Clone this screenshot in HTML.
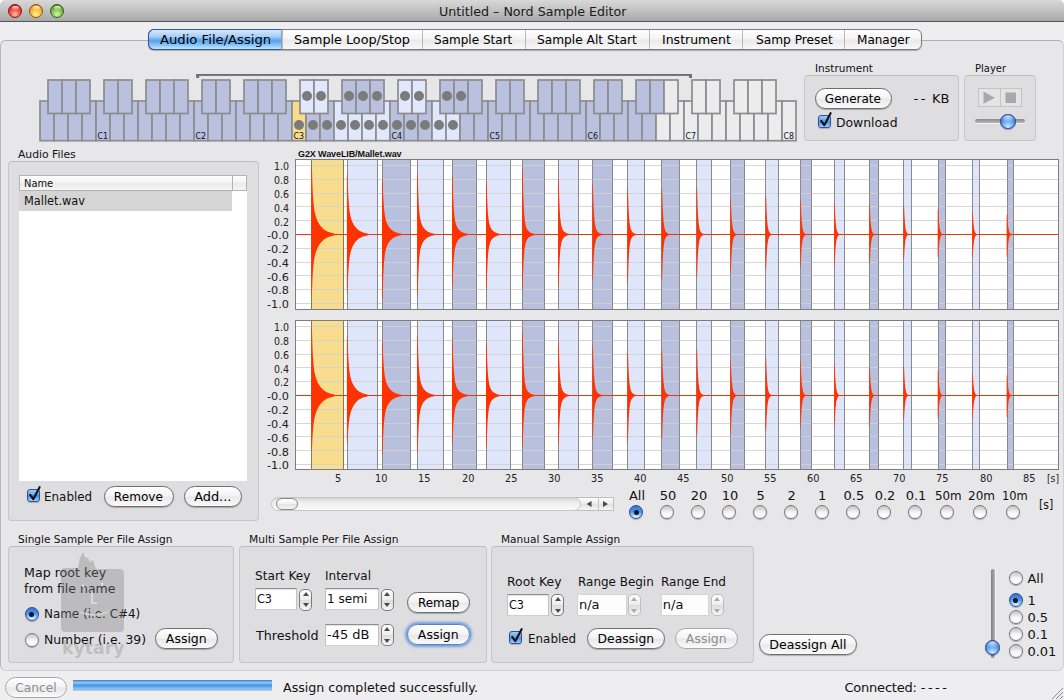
<!DOCTYPE html>
<html><head><meta charset="utf-8"><title>Untitled – Nord Sample Editor</title>
<style>
*{box-sizing:border-box;margin:0;padding:0}
html,body{width:1064px;height:700px;overflow:hidden;background:#eeedef}
body{position:relative;font-family:"DejaVu Sans","Liberation Sans",sans-serif;font-size:13px;color:#111}
.abs{position:absolute}
.t{position:absolute;white-space:nowrap;line-height:1;transform-origin:0 50%}
.wincorner{left:0;top:0;width:1064px;height:10px;background:#fff}
.titlebar{left:0;top:0;width:1064px;height:22px;background:linear-gradient(#d8d8d8,#c4c4c4 45%,#a7a7a7);border-bottom:1px solid #555;border-radius:5px 5px 0 0}
.tl{position:absolute;top:4px;width:14px;height:14px;border-radius:50%}
.pane{left:0;top:40px;width:1064px;height:631px;background:#e7e6e8;border:1px solid #b0b0b2;border-left-color:#b8b8bb;border-right-color:#cfcfd2;border-bottom-color:#d2d2d5;border-radius:6px}
.tabs{left:148px;top:29px;width:774px;height:21px;border:1px solid #7a7a7a;border-radius:6px;background:linear-gradient(#ffffff,#f4f4f4 48%,#e9e9e9 52%,#f8f8f8);box-shadow:0 1px 1px rgba(0,0,0,.25)}
.tabsel{left:148px;top:29px;width:134px;height:21px;border:1px solid #35549a;border-right-color:#7fa6dc;border-radius:6px 0 0 6px;background:linear-gradient(#d6e9fb 0%,#a8cff5 34%,#6eaef0 50%,#5aa2ee 58%,#8cc6f8 80%,#c2e8ff 100%)}
.grp{position:absolute;background:#dedde0;border:1px solid #c6c5c8;border-top-color:#bdbcc0;border-radius:4px}
.btn{position:absolute;height:21px;border-radius:10.5px;border:1px solid #6e6e6e;background:linear-gradient(#ffffff,#f3f3f3 48%,#e8e8e8 52%,#fafafa);box-shadow:0 1px 1px rgba(0,0,0,0.25);text-align:center;font-size:13px;line-height:19px;white-space:nowrap;color:#000}
.btn.dis{color:#8e8e8e;border-color:#a8a8a8;box-shadow:none}
.btn.def{border-color:#5582c8;box-shadow:0 0 2.5px 2px rgba(86,146,220,0.8)}
.fld{position:absolute;background:#fff;border:1px solid #c2c2c2;border-top-color:#8e8e8e;border-bottom-color:#d0d0d0;box-shadow:inset 0 1px 1px rgba(0,0,0,0.13);font-size:13px;line-height:19px;padding-left:1px;white-space:nowrap;overflow:hidden}
.fld.dis{border-color:#d4d4d4;box-shadow:none;background:#fdfdfd}
.spin{position:absolute;width:13px;height:22px;border:1px solid #7c7c7c;border-radius:5px;background:linear-gradient(#fff,#ececec 50%,#dcdcdc 50%,#f6f6f6)}
.spin.dis{border-color:#bdbdbd}
.spin:before,.spin:after{content:"";position:absolute;left:2.3px;border-left:3.2px solid transparent;border-right:3.2px solid transparent}
.spin:before{top:2.2px;border-bottom:4.4px solid #4a4a4a}
.spin:after{bottom:2.4px;border-top:4.4px solid #4a4a4a}
.spin.dis:before{border-bottom-color:#aaa}
.spin.dis:after{border-top-color:#aaa}
.radio{position:absolute;width:14px;height:14px;border-radius:50%;border:1px solid #777;background:radial-gradient(ellipse 90% 70% at 50% 95%,#fff 0%,#fafafa 45%,rgba(255,255,255,0) 100%),linear-gradient(#c8c8c8,#e4e4e4 45%,#f6f6f6);box-shadow:0 1px 1px rgba(0,0,0,.25)}
.radio.on{border-color:#2a4a94;background:radial-gradient(ellipse 85% 55% at 50% 100%,#e8f8ff 0%,#a8dcff 40%,rgba(130,190,250,0) 100%),linear-gradient(#3a74d0,#4d8ee4 40%,#6cb0f4)}
.radio.on:after{content:"";position:absolute;left:3.5px;top:3.5px;width:5px;height:5px;border-radius:50%;background:#0c1428}
.chk{position:absolute;width:13px;height:13px;border-radius:3px;border:1px solid #2b4f9e;background:linear-gradient(#9cccf6,#5f9fe6 50%,#4486dc 50%,#9ad4ff);box-shadow:0 1px 1px rgba(0,0,0,.2)}
.knob{width:15.5px;height:15.5px;border-radius:50%;border:1px solid #1e3f92;background:radial-gradient(ellipse 70% 40% at 50% 14%,rgba(255,255,255,.75),rgba(255,255,255,0) 100%),radial-gradient(circle at 50% 88%,#c8ecff,#6eb2f4 38%,#2c68cc 80%,#2458b8);box-shadow:0 1px 1px rgba(0,0,0,.3)}
.tl i{position:absolute;left:2.5px;top:0.5px;width:7px;height:4.5px;border-radius:50%;background:linear-gradient(rgba(255,255,255,.85),rgba(255,255,255,.05))}
</style></head>
<body>
<div class="abs wincorner"></div>
<div class="abs titlebar"></div>
<div class="tl" style="left:8px;background:radial-gradient(circle at 50% 78%,#ffc0b4 0%,#fa5a4c 40%,#d02a20 78%,#7c1812 100%);border:1px solid #7c1812"><i></i></div>
<div class="tl" style="left:29px;background:radial-gradient(circle at 50% 78%,#fff4b0 0%,#fcc43a 40%,#e49a1c 78%,#8c5412 100%);border:1px solid #8c5412"><i></i></div>
<div class="tl" style="left:50px;background:radial-gradient(circle at 50% 78%,#dcf4b4 0%,#8cc85c 40%,#569c2c 78%,#2c5c14 100%);border:1px solid #2c5c14"><i></i></div>
<div class="t" style="left:438.5px;top:5px;font-size:13px;color:#1a1a1a;transform:scaleX(0.973);">Untitled – Nord Sample Editor</div>
<div class="abs pane"></div>
<div class="abs tabs"></div>
<div class="abs tabsel"></div>
<div class="abs" style="left:282.0px;top:30px;width:1px;height:19px;background:#b9b9b9"></div>
<div class="abs" style="left:421.5px;top:30px;width:1px;height:19px;background:#b9b9b9"></div>
<div class="abs" style="left:524.7px;top:30px;width:1px;height:19px;background:#b9b9b9"></div>
<div class="abs" style="left:649.2px;top:30px;width:1px;height:19px;background:#b9b9b9"></div>
<div class="abs" style="left:742.0px;top:30px;width:1px;height:19px;background:#b9b9b9"></div>
<div class="abs" style="left:844.0px;top:30px;width:1px;height:19px;background:#b9b9b9"></div>
<div class="t" style="left:159.6px;top:33px;font-size:13px;color:#000;transform:scaleX(1.013);">Audio File/Assign</div>
<div class="t" style="left:293.5px;top:33px;font-size:13px;color:#000;transform:scaleX(0.983);">Sample Loop/Stop</div>
<div class="t" style="left:434.2px;top:33px;font-size:13px;color:#000;transform:scaleX(0.925);">Sample Start</div>
<div class="t" style="left:537.4px;top:33px;font-size:13px;color:#000;transform:scaleX(0.938);">Sample Alt Start</div>
<div class="t" style="left:662.0px;top:33px;font-size:13px;color:#000;transform:scaleX(0.962);">Instrument</div>
<div class="t" style="left:755.6px;top:33px;font-size:13px;color:#000;transform:scaleX(0.938);">Samp Preset</div>
<div class="t" style="left:856.5px;top:33px;font-size:13px;color:#000;transform:scaleX(0.925);">Manager</div>
<svg class="abs" style="left:0;top:60px" width="810" height="90" viewBox="0 60 810 90"><rect x="196.5" y="74" width="495" height="1.9" fill="#6f6f6f"/><rect x="196.2" y="74" width="3" height="4" fill="#6f6f6f"/><rect x="689" y="74" width="3" height="4" fill="#6f6f6f"/><rect x="40" y="101" width="14" height="39.7" fill="#b9c1df" stroke="#8c8c90" stroke-width="1.7"/><rect x="54" y="101" width="14" height="39.7" fill="#b9c1df" stroke="#8c8c90" stroke-width="1.7"/><rect x="68" y="101" width="14" height="39.7" fill="#b9c1df" stroke="#8c8c90" stroke-width="1.7"/><rect x="82" y="101" width="14" height="39.7" fill="#b9c1df" stroke="#8c8c90" stroke-width="1.7"/><rect x="96" y="101" width="14" height="39.7" fill="#b9c1df" stroke="#8c8c90" stroke-width="1.7"/><rect x="110" y="101" width="14" height="39.7" fill="#b9c1df" stroke="#8c8c90" stroke-width="1.7"/><rect x="124" y="101" width="14" height="39.7" fill="#b9c1df" stroke="#8c8c90" stroke-width="1.7"/><rect x="138" y="101" width="14" height="39.7" fill="#b9c1df" stroke="#8c8c90" stroke-width="1.7"/><rect x="152" y="101" width="14" height="39.7" fill="#b9c1df" stroke="#8c8c90" stroke-width="1.7"/><rect x="166" y="101" width="14" height="39.7" fill="#b9c1df" stroke="#8c8c90" stroke-width="1.7"/><rect x="180" y="101" width="14" height="39.7" fill="#b9c1df" stroke="#8c8c90" stroke-width="1.7"/><rect x="194" y="101" width="14" height="39.7" fill="#b9c1df" stroke="#8c8c90" stroke-width="1.7"/><rect x="208" y="101" width="14" height="39.7" fill="#b9c1df" stroke="#8c8c90" stroke-width="1.7"/><rect x="222" y="101" width="14" height="39.7" fill="#b9c1df" stroke="#8c8c90" stroke-width="1.7"/><rect x="236" y="101" width="14" height="39.7" fill="#b9c1df" stroke="#8c8c90" stroke-width="1.7"/><rect x="250" y="101" width="14" height="39.7" fill="#b9c1df" stroke="#8c8c90" stroke-width="1.7"/><rect x="264" y="101" width="14" height="39.7" fill="#b9c1df" stroke="#8c8c90" stroke-width="1.7"/><rect x="278" y="101" width="14" height="39.7" fill="#b9c1df" stroke="#8c8c90" stroke-width="1.7"/><rect x="292" y="101" width="14" height="39.7" fill="#f7dc8a" stroke="#8c8c90" stroke-width="1.7"/><rect x="306" y="101" width="14" height="39.7" fill="#b9c1df" stroke="#8c8c90" stroke-width="1.7"/><rect x="320" y="101" width="14" height="39.7" fill="#b9c1df" stroke="#8c8c90" stroke-width="1.7"/><rect x="334" y="101" width="14" height="39.7" fill="#e2e8fb" stroke="#8c8c90" stroke-width="1.7"/><rect x="348" y="101" width="14" height="39.7" fill="#e2e8fb" stroke="#8c8c90" stroke-width="1.7"/><rect x="362" y="101" width="14" height="39.7" fill="#e2e8fb" stroke="#8c8c90" stroke-width="1.7"/><rect x="376" y="101" width="14" height="39.7" fill="#e2e8fb" stroke="#8c8c90" stroke-width="1.7"/><rect x="390" y="101" width="14" height="39.7" fill="#b9c1df" stroke="#8c8c90" stroke-width="1.7"/><rect x="404" y="101" width="14" height="39.7" fill="#b9c1df" stroke="#8c8c90" stroke-width="1.7"/><rect x="418" y="101" width="14" height="39.7" fill="#b9c1df" stroke="#8c8c90" stroke-width="1.7"/><rect x="432" y="101" width="14" height="39.7" fill="#e2e8fb" stroke="#8c8c90" stroke-width="1.7"/><rect x="446" y="101" width="14" height="39.7" fill="#e2e8fb" stroke="#8c8c90" stroke-width="1.7"/><rect x="460" y="101" width="14" height="39.7" fill="#b9c1df" stroke="#8c8c90" stroke-width="1.7"/><rect x="474" y="101" width="14" height="39.7" fill="#b9c1df" stroke="#8c8c90" stroke-width="1.7"/><rect x="488" y="101" width="14" height="39.7" fill="#b9c1df" stroke="#8c8c90" stroke-width="1.7"/><rect x="502" y="101" width="14" height="39.7" fill="#b9c1df" stroke="#8c8c90" stroke-width="1.7"/><rect x="516" y="101" width="14" height="39.7" fill="#b9c1df" stroke="#8c8c90" stroke-width="1.7"/><rect x="530" y="101" width="14" height="39.7" fill="#b9c1df" stroke="#8c8c90" stroke-width="1.7"/><rect x="544" y="101" width="14" height="39.7" fill="#b9c1df" stroke="#8c8c90" stroke-width="1.7"/><rect x="558" y="101" width="14" height="39.7" fill="#b9c1df" stroke="#8c8c90" stroke-width="1.7"/><rect x="572" y="101" width="14" height="39.7" fill="#b9c1df" stroke="#8c8c90" stroke-width="1.7"/><rect x="586" y="101" width="14" height="39.7" fill="#b9c1df" stroke="#8c8c90" stroke-width="1.7"/><rect x="600" y="101" width="14" height="39.7" fill="#b9c1df" stroke="#8c8c90" stroke-width="1.7"/><rect x="614" y="101" width="14" height="39.7" fill="#b9c1df" stroke="#8c8c90" stroke-width="1.7"/><rect x="628" y="101" width="14" height="39.7" fill="#b9c1df" stroke="#8c8c90" stroke-width="1.7"/><rect x="642" y="101" width="14" height="39.7" fill="#b9c1df" stroke="#8c8c90" stroke-width="1.7"/><rect x="656" y="101" width="14" height="39.7" fill="#ececec" stroke="#8c8c90" stroke-width="1.7"/><rect x="670" y="101" width="14" height="39.7" fill="#ececec" stroke="#8c8c90" stroke-width="1.7"/><rect x="684" y="101" width="14" height="39.7" fill="#ececec" stroke="#8c8c90" stroke-width="1.7"/><rect x="698" y="101" width="14" height="39.7" fill="#ececec" stroke="#8c8c90" stroke-width="1.7"/><rect x="712" y="101" width="14" height="39.7" fill="#ececec" stroke="#8c8c90" stroke-width="1.7"/><rect x="726" y="101" width="14" height="39.7" fill="#ececec" stroke="#8c8c90" stroke-width="1.7"/><rect x="740" y="101" width="14" height="39.7" fill="#ececec" stroke="#8c8c90" stroke-width="1.7"/><rect x="754" y="101" width="14" height="39.7" fill="#ececec" stroke="#8c8c90" stroke-width="1.7"/><rect x="768" y="101" width="14" height="39.7" fill="#ececec" stroke="#8c8c90" stroke-width="1.7"/><rect x="782" y="101" width="14" height="39.7" fill="#ececec" stroke="#8c8c90" stroke-width="1.7"/><circle cx="299" cy="125" r="5" fill="#7b7b7b"/><circle cx="313" cy="125" r="5" fill="#7b7b7b"/><circle cx="327" cy="125" r="5" fill="#7b7b7b"/><circle cx="341" cy="125" r="5" fill="#7b7b7b"/><circle cx="355" cy="125" r="5" fill="#7b7b7b"/><circle cx="369" cy="125" r="5" fill="#7b7b7b"/><circle cx="383" cy="125" r="5" fill="#7b7b7b"/><circle cx="397" cy="125" r="5" fill="#7b7b7b"/><circle cx="411" cy="125" r="5" fill="#7b7b7b"/><circle cx="425" cy="125" r="5" fill="#7b7b7b"/><circle cx="439" cy="125" r="5" fill="#7b7b7b"/><circle cx="453" cy="125" r="5" fill="#7b7b7b"/><rect x="48" y="80" width="14" height="33.5" fill="#b9c1df" stroke="#8c8c90" stroke-width="1.7"/><rect x="62" y="80" width="14" height="33.5" fill="#b9c1df" stroke="#8c8c90" stroke-width="1.7"/><rect x="76" y="80" width="14" height="33.5" fill="#b9c1df" stroke="#8c8c90" stroke-width="1.7"/><rect x="104" y="80" width="14" height="33.5" fill="#b9c1df" stroke="#8c8c90" stroke-width="1.7"/><rect x="118" y="80" width="14" height="33.5" fill="#b9c1df" stroke="#8c8c90" stroke-width="1.7"/><rect x="146" y="80" width="14" height="33.5" fill="#b9c1df" stroke="#8c8c90" stroke-width="1.7"/><rect x="160" y="80" width="14" height="33.5" fill="#b9c1df" stroke="#8c8c90" stroke-width="1.7"/><rect x="174" y="80" width="14" height="33.5" fill="#b9c1df" stroke="#8c8c90" stroke-width="1.7"/><rect x="202" y="80" width="14" height="33.5" fill="#b9c1df" stroke="#8c8c90" stroke-width="1.7"/><rect x="216" y="80" width="14" height="33.5" fill="#b9c1df" stroke="#8c8c90" stroke-width="1.7"/><rect x="244" y="80" width="14" height="33.5" fill="#b9c1df" stroke="#8c8c90" stroke-width="1.7"/><rect x="258" y="80" width="14" height="33.5" fill="#b9c1df" stroke="#8c8c90" stroke-width="1.7"/><rect x="272" y="80" width="14" height="33.5" fill="#b9c1df" stroke="#8c8c90" stroke-width="1.7"/><rect x="300" y="80" width="14" height="33.5" fill="#e2e8fb" stroke="#8c8c90" stroke-width="1.7"/><circle cx="307" cy="96" r="5" fill="#7b7b7b"/><rect x="314" y="80" width="14" height="33.5" fill="#e2e8fb" stroke="#8c8c90" stroke-width="1.7"/><circle cx="321" cy="96" r="5" fill="#7b7b7b"/><rect x="342" y="80" width="14" height="33.5" fill="#b9c1df" stroke="#8c8c90" stroke-width="1.7"/><circle cx="349" cy="96" r="5" fill="#7b7b7b"/><rect x="356" y="80" width="14" height="33.5" fill="#b9c1df" stroke="#8c8c90" stroke-width="1.7"/><circle cx="363" cy="96" r="5" fill="#7b7b7b"/><rect x="370" y="80" width="14" height="33.5" fill="#b9c1df" stroke="#8c8c90" stroke-width="1.7"/><circle cx="377" cy="96" r="5" fill="#7b7b7b"/><rect x="398" y="80" width="14" height="33.5" fill="#e2e8fb" stroke="#8c8c90" stroke-width="1.7"/><circle cx="405" cy="96" r="5" fill="#7b7b7b"/><rect x="412" y="80" width="14" height="33.5" fill="#e2e8fb" stroke="#8c8c90" stroke-width="1.7"/><circle cx="419" cy="96" r="5" fill="#7b7b7b"/><rect x="440" y="80" width="14" height="33.5" fill="#b9c1df" stroke="#8c8c90" stroke-width="1.7"/><circle cx="447" cy="96" r="5" fill="#7b7b7b"/><rect x="454" y="80" width="14" height="33.5" fill="#b9c1df" stroke="#8c8c90" stroke-width="1.7"/><circle cx="461" cy="96" r="5" fill="#7b7b7b"/><rect x="468" y="80" width="14" height="33.5" fill="#b9c1df" stroke="#8c8c90" stroke-width="1.7"/><rect x="496" y="80" width="14" height="33.5" fill="#b9c1df" stroke="#8c8c90" stroke-width="1.7"/><rect x="510" y="80" width="14" height="33.5" fill="#b9c1df" stroke="#8c8c90" stroke-width="1.7"/><rect x="538" y="80" width="14" height="33.5" fill="#b9c1df" stroke="#8c8c90" stroke-width="1.7"/><rect x="552" y="80" width="14" height="33.5" fill="#b9c1df" stroke="#8c8c90" stroke-width="1.7"/><rect x="566" y="80" width="14" height="33.5" fill="#b9c1df" stroke="#8c8c90" stroke-width="1.7"/><rect x="594" y="80" width="14" height="33.5" fill="#b9c1df" stroke="#8c8c90" stroke-width="1.7"/><rect x="608" y="80" width="14" height="33.5" fill="#b9c1df" stroke="#8c8c90" stroke-width="1.7"/><rect x="636" y="80" width="14" height="33.5" fill="#b9c1df" stroke="#8c8c90" stroke-width="1.7"/><rect x="650" y="80" width="14" height="33.5" fill="#b9c1df" stroke="#8c8c90" stroke-width="1.7"/><rect x="664" y="80" width="14" height="33.5" fill="#ececec" stroke="#8c8c90" stroke-width="1.7"/><rect x="692" y="80" width="14" height="33.5" fill="#ececec" stroke="#8c8c90" stroke-width="1.7"/><rect x="706" y="80" width="14" height="33.5" fill="#ececec" stroke="#8c8c90" stroke-width="1.7"/><rect x="734" y="80" width="14" height="33.5" fill="#ececec" stroke="#8c8c90" stroke-width="1.7"/><rect x="748" y="80" width="14" height="33.5" fill="#ececec" stroke="#8c8c90" stroke-width="1.7"/><rect x="762" y="80" width="14" height="33.5" fill="#ececec" stroke="#8c8c90" stroke-width="1.7"/><text x="97.6" y="138.8" font-size="9" textLength="10.5" lengthAdjust="spacingAndGlyphs" fill="#0c0c28" font-family='"DejaVu Sans","Liberation Sans",sans-serif'>C1</text><text x="195.6" y="138.8" font-size="9" textLength="10.5" lengthAdjust="spacingAndGlyphs" fill="#0c0c28" font-family='"DejaVu Sans","Liberation Sans",sans-serif'>C2</text><text x="293.6" y="138.8" font-size="9" textLength="10.5" lengthAdjust="spacingAndGlyphs" fill="#0c0c28" font-family='"DejaVu Sans","Liberation Sans",sans-serif'>C3</text><text x="391.6" y="138.8" font-size="9" textLength="10.5" lengthAdjust="spacingAndGlyphs" fill="#0c0c28" font-family='"DejaVu Sans","Liberation Sans",sans-serif'>C4</text><text x="489.6" y="138.8" font-size="9" textLength="10.5" lengthAdjust="spacingAndGlyphs" fill="#0c0c28" font-family='"DejaVu Sans","Liberation Sans",sans-serif'>C5</text><text x="587.6" y="138.8" font-size="9" textLength="10.5" lengthAdjust="spacingAndGlyphs" fill="#0c0c28" font-family='"DejaVu Sans","Liberation Sans",sans-serif'>C6</text><text x="685.6" y="138.8" font-size="9" textLength="10.5" lengthAdjust="spacingAndGlyphs" fill="#0c0c28" font-family='"DejaVu Sans","Liberation Sans",sans-serif'>C7</text><text x="783.6" y="138.8" font-size="9" textLength="10.5" lengthAdjust="spacingAndGlyphs" fill="#0c0c28" font-family='"DejaVu Sans","Liberation Sans",sans-serif'>C8</text></svg>
<div class="t" style="left:814.5px;top:63px;font-size:11px;color:#111;transform:scaleX(0.958);">Instrument</div>
<div class="grp" style="left:804.0px;top:75.0px;width:155.0px;height:66.0px;"></div>
<div class="btn " style="left:815.0px;top:88.0px;width:77.0px;"><span style="display:inline-block;transform:translateX(-0.5px) scaleX(0.922)">Generate</span></div>
<div class="t" style="left:913.6px;top:91.6px;font-size:13px"><span style="letter-spacing:2.4px">--</span> KB</div>
<div class="chk" style="left:817.5px;top:115.0px"><svg width="18" height="18" viewBox="0 0 18 18" style="position:absolute;left:-1px;top:-5px;overflow:visible"><path d="M3.2 9.8 L6.3 14.2 L12.6 2.2" fill="none" stroke="#111" stroke-width="2.1" stroke-linecap="round" stroke-linejoin="round"/></svg></div>
<div class="t" style="left:835.5px;top:116px;font-size:13px;color:#111;transform:scaleX(0.952);">Download</div>
<div class="t" style="left:974.5px;top:63px;font-size:11px;color:#111;transform:scaleX(0.906);">Player</div>
<div class="grp" style="left:964.0px;top:75.0px;width:72.0px;height:66.0px;"></div>
<div class="abs" style="left:978px;top:88px;width:44px;height:19px;border:1px solid #c4c4c4;background:#e4e4e4"></div>
<div class="abs" style="left:999.5px;top:88px;width:1px;height:19px;background:#c4c4c4"></div>
<svg class="abs" style="left:978px;top:88px" width="44" height="19"><path d="M5.5 3.5 L17 9.7 L5.5 15.8 Z" fill="#a9a9a9"/><rect x="27.5" y="4.5" width="10.5" height="10.5" fill="#a9a9a9"/></svg>
<div class="abs" style="left:975px;top:119.3px;width:50px;height:4px;border-radius:2px;background:linear-gradient(#8a8a8a,#b8b8b8);box-shadow:0 1px 0 rgba(255,255,255,.6)"></div>
<div class="abs knob" style="left:1000px;top:113.5px"></div>
<div class="t" style="left:18.3px;top:149px;font-size:11px;color:#111;transform:scaleX(0.980);">Audio Files</div>
<div class="grp" style="left:8.0px;top:161.0px;width:250.5px;height:359.6px;"></div>
<div class="abs" style="left:19px;top:175px;width:228px;height:306px;background:#fff"></div>
<div class="abs" style="left:19px;top:174.5px;width:228px;height:16px;border:1px solid #b4b4b4;background:linear-gradient(#fdfdfd,#f3f3f3 50%,#e9e9e9 50%,#f6f6f6)"></div>
<div class="abs" style="left:231.5px;top:175px;width:1px;height:15px;background:#b4b4b4"></div>
<div class="t" style="left:23.6px;top:178px;font-size:11px;color:#111;transform:scaleX(0.900);">Name</div>
<div class="abs" style="left:19px;top:190.5px;width:213px;height:20px;background:#d5d5d5"></div>
<div class="t" style="left:24.0px;top:194px;font-size:13px;color:#111;transform:scaleX(0.872);">Mallet.wav</div>
<div class="chk" style="left:26.8px;top:489.0px"><svg width="18" height="18" viewBox="0 0 18 18" style="position:absolute;left:-1px;top:-5px;overflow:visible"><path d="M3.2 9.8 L6.3 14.2 L12.6 2.2" fill="none" stroke="#111" stroke-width="2.1" stroke-linecap="round" stroke-linejoin="round"/></svg></div>
<div class="t" style="left:44.4px;top:490px;font-size:13px;color:#111;transform:scaleX(0.917);">Enabled</div>
<div class="btn " style="left:103.5px;top:486.0px;width:70.5px;"><span style="display:inline-block;transform:scaleX(0.929)">Remove</span></div>
<div class="btn " style="left:184.0px;top:486.0px;width:58.0px;"><span style="display:inline-block;transform:scaleX(0.993)">Add...</span></div>
<div class="t" style="left:298px;top:149.6px;font-size:9px;font-weight:bold;font-family:'Liberation Sans',sans-serif;color:#111;letter-spacing:-0.1px">G2X WaveLIB/Mallet.wav</div>
<svg class="abs" style="left:294px;top:158px" width="766" height="153" viewBox="294 158 766 153"><rect x="295.5" y="159.5" width="763.0" height="150.0" fill="#fff"/><rect x="311" y="159.5" width="32" height="150.0" fill="#f8dd8e"/><rect x="347" y="159.5" width="30" height="150.0" fill="#dfe6fc"/><rect x="382" y="159.5" width="28" height="150.0" fill="#b8c0de"/><rect x="417" y="159.5" width="26" height="150.0" fill="#dfe6fc"/><rect x="452" y="159.5" width="24" height="150.0" fill="#b8c0de"/><rect x="486" y="159.5" width="24" height="150.0" fill="#dfe6fc"/><rect x="522" y="159.5" width="22" height="150.0" fill="#b8c0de"/><rect x="558" y="159.5" width="20" height="150.0" fill="#dfe6fc"/><rect x="592" y="159.5" width="20" height="150.0" fill="#b8c0de"/><rect x="627" y="159.5" width="17" height="150.0" fill="#dfe6fc"/><rect x="661" y="159.5" width="18" height="150.0" fill="#b8c0de"/><rect x="696" y="159.5" width="15" height="150.0" fill="#dfe6fc"/><rect x="730" y="159.5" width="14" height="150.0" fill="#b8c0de"/><rect x="765" y="159.5" width="13" height="150.0" fill="#dfe6fc"/><rect x="800" y="159.5" width="11" height="150.0" fill="#b8c0de"/><rect x="834" y="159.5" width="10" height="150.0" fill="#dfe6fc"/><rect x="869" y="159.5" width="9" height="150.0" fill="#b8c0de"/><rect x="903" y="159.5" width="8" height="150.0" fill="#dfe6fc"/><rect x="938" y="159.5" width="7" height="150.0" fill="#b8c0de"/><rect x="972" y="159.5" width="7" height="150.0" fill="#dfe6fc"/><rect x="1007" y="159.5" width="6" height="150.0" fill="#b8c0de"/><rect x="295.5" y="165" width="763.0" height="1" fill="#d2d2d2" fill-opacity="0.9"/><rect x="295.5" y="179" width="763.0" height="1" fill="#d2d2d2" fill-opacity="0.9"/><rect x="295.5" y="193" width="763.0" height="1" fill="#d2d2d2" fill-opacity="0.9"/><rect x="295.5" y="206" width="763.0" height="1" fill="#d2d2d2" fill-opacity="0.9"/><rect x="295.5" y="220" width="763.0" height="1" fill="#d2d2d2" fill-opacity="0.9"/><rect x="295.5" y="248" width="763.0" height="1" fill="#d2d2d2" fill-opacity="0.9"/><rect x="295.5" y="262" width="763.0" height="1" fill="#d2d2d2" fill-opacity="0.9"/><rect x="295.5" y="275" width="763.0" height="1" fill="#d2d2d2" fill-opacity="0.9"/><rect x="295.5" y="289" width="763.0" height="1" fill="#d2d2d2" fill-opacity="0.9"/><rect x="295.5" y="303" width="763.0" height="1" fill="#d2d2d2" fill-opacity="0.9"/><rect x="311" y="159.5" width="1" height="150.0" fill="#8a7c50"/><rect x="343" y="159.5" width="1" height="150.0" fill="#8a7c50"/><rect x="347" y="159.5" width="1" height="150.0" fill="#8a8a8a"/><rect x="377" y="159.5" width="1" height="150.0" fill="#8a8a8a"/><rect x="382" y="159.5" width="1" height="150.0" fill="#8a8a8a"/><rect x="410" y="159.5" width="1" height="150.0" fill="#8a8a8a"/><rect x="417" y="159.5" width="1" height="150.0" fill="#8a8a8a"/><rect x="443" y="159.5" width="1" height="150.0" fill="#8a8a8a"/><rect x="452" y="159.5" width="1" height="150.0" fill="#8a8a8a"/><rect x="476" y="159.5" width="1" height="150.0" fill="#8a8a8a"/><rect x="486" y="159.5" width="1" height="150.0" fill="#8a8a8a"/><rect x="510" y="159.5" width="1" height="150.0" fill="#8a8a8a"/><rect x="522" y="159.5" width="1" height="150.0" fill="#8a8a8a"/><rect x="544" y="159.5" width="1" height="150.0" fill="#8a8a8a"/><rect x="558" y="159.5" width="1" height="150.0" fill="#8a8a8a"/><rect x="578" y="159.5" width="1" height="150.0" fill="#8a8a8a"/><rect x="592" y="159.5" width="1" height="150.0" fill="#8a8a8a"/><rect x="612" y="159.5" width="1" height="150.0" fill="#8a8a8a"/><rect x="627" y="159.5" width="1" height="150.0" fill="#8a8a8a"/><rect x="644" y="159.5" width="1" height="150.0" fill="#8a8a8a"/><rect x="661" y="159.5" width="1" height="150.0" fill="#8a8a8a"/><rect x="679" y="159.5" width="1" height="150.0" fill="#8a8a8a"/><rect x="696" y="159.5" width="1" height="150.0" fill="#8a8a8a"/><rect x="711" y="159.5" width="1" height="150.0" fill="#8a8a8a"/><rect x="730" y="159.5" width="1" height="150.0" fill="#8a8a8a"/><rect x="744" y="159.5" width="1" height="150.0" fill="#8a8a8a"/><rect x="765" y="159.5" width="1" height="150.0" fill="#8a8a8a"/><rect x="778" y="159.5" width="1" height="150.0" fill="#8a8a8a"/><rect x="800" y="159.5" width="1" height="150.0" fill="#8a8a8a"/><rect x="811" y="159.5" width="1" height="150.0" fill="#8a8a8a"/><rect x="834" y="159.5" width="1" height="150.0" fill="#8a8a8a"/><rect x="844" y="159.5" width="1" height="150.0" fill="#8a8a8a"/><rect x="869" y="159.5" width="1" height="150.0" fill="#8a8a8a"/><rect x="878" y="159.5" width="1" height="150.0" fill="#8a8a8a"/><rect x="903" y="159.5" width="1" height="150.0" fill="#8a8a8a"/><rect x="911" y="159.5" width="1" height="150.0" fill="#8a8a8a"/><rect x="938" y="159.5" width="1" height="150.0" fill="#8a8a8a"/><rect x="945" y="159.5" width="1" height="150.0" fill="#8a8a8a"/><rect x="972" y="159.5" width="1" height="150.0" fill="#8a8a8a"/><rect x="979" y="159.5" width="1" height="150.0" fill="#8a8a8a"/><rect x="1007" y="159.5" width="1" height="150.0" fill="#8a8a8a"/><rect x="1013" y="159.5" width="1" height="150.0" fill="#8a8a8a"/><rect x="295.5" y="234" width="763.0" height="1" fill="#e2380a"/><polygon fill="#ff3300" points="311.3,173.2 311.5,166.4 311.9,166.4 312.4,183.7 312.9,194.7 313.4,201.9 313.9,206.8 314.4,210.4 314.9,213.0 315.4,215.1 315.9,216.8 316.4,218.3 316.9,219.6 317.4,220.7 317.9,221.8 318.4,222.7 318.9,223.6 319.4,224.4 319.9,225.1 320.4,225.8 320.9,226.5 321.4,227.1 321.9,227.6 322.4,228.1 322.9,228.6 323.4,229.0 323.9,229.4 324.4,229.8 324.9,230.1 325.4,230.4 325.9,230.7 326.4,231.0 326.9,231.3 327.4,231.5 327.9,231.7 328.4,231.9 328.9,232.1 329.4,232.3 329.9,232.4 330.4,232.6 330.9,232.7 331.4,232.9 331.9,233.0 332.4,233.1 332.9,233.2 333.4,233.3 333.9,233.4 335.3,234.5 333.9,235.6 333.4,235.7 332.9,235.8 332.4,235.9 331.9,236.0 331.4,236.1 330.9,236.3 330.4,236.4 329.9,236.6 329.4,236.7 328.9,236.9 328.4,237.1 327.9,237.3 327.4,237.5 326.9,237.7 326.4,238.0 325.9,238.3 325.4,238.6 324.9,238.9 324.4,239.2 323.9,239.6 323.4,240.0 322.9,240.4 322.4,240.9 321.9,241.4 321.4,241.9 320.9,242.5 320.4,243.2 319.9,243.8 319.4,244.6 318.9,245.4 318.4,246.3 317.9,247.2 317.4,248.2 316.9,249.4 316.4,250.6 315.9,252.1 315.4,253.7 314.9,255.6 314.4,258.1 313.9,261.2 313.4,265.4 312.9,271.5 312.4,280.5 311.9,294.5 311.5,294.5 311.3,288.5"/><polygon fill="#ff3300" points="346.9,179.1 347.1,172.9 347.5,172.9 348.0,188.9 348.5,199.1 349.0,205.9 349.5,210.4 350.0,213.7 350.5,216.2 351.0,218.1 351.5,219.7 352.0,221.0 352.5,222.2 353.0,223.3 353.5,224.2 354.0,225.0 354.5,225.8 355.0,226.5 355.5,227.1 356.0,227.7 356.5,228.3 357.0,228.8 357.5,229.2 358.0,229.7 358.5,230.0 359.0,230.4 359.5,230.7 360.0,231.0 360.5,231.3 361.0,231.6 361.5,231.8 362.0,232.0 362.5,232.2 363.0,232.4 363.5,232.6 364.0,232.7 364.5,232.9 365.0,233.0 365.5,233.1 366.0,233.2 366.5,233.3 367.0,233.4 367.5,233.5 368.9,234.5 367.5,235.5 367.0,235.6 366.5,235.7 366.0,235.8 365.5,235.9 365.0,236.0 364.5,236.1 364.0,236.3 363.5,236.4 363.0,236.6 362.5,236.8 362.0,237.0 361.5,237.2 361.0,237.4 360.5,237.7 360.0,238.0 359.5,238.3 359.0,238.6 358.5,239.0 358.0,239.3 357.5,239.8 357.0,240.2 356.5,240.7 356.0,241.3 355.5,241.8 355.0,242.5 354.5,243.2 354.0,244.0 353.5,244.8 353.0,245.7 352.5,246.8 352.0,247.9 351.5,249.3 351.0,250.8 350.5,252.7 350.0,255.1 349.5,258.3 349.0,262.7 348.5,269.0 348.0,278.7 347.5,293.8 347.1,293.8 346.9,287.9"/><polygon fill="#ff3300" points="382.0,184.2 382.2,178.6 382.6,178.6 383.1,193.5 383.6,203.0 384.1,209.3 384.6,213.6 385.1,216.6 385.6,218.9 386.1,220.7 386.6,222.2 387.1,223.4 387.6,224.5 388.1,225.4 388.6,226.2 389.1,227.0 389.6,227.6 390.1,228.2 390.6,228.8 391.1,229.3 391.6,229.7 392.1,230.2 392.6,230.5 393.1,230.9 393.6,231.2 394.1,231.5 394.6,231.8 395.1,232.0 395.6,232.2 396.1,232.4 396.6,232.6 397.1,232.8 397.6,232.9 398.1,233.1 398.6,233.2 399.1,233.3 399.6,233.4 400.1,233.5 400.6,233.6 401.1,233.7 402.2,234.5 401.1,235.3 400.6,235.4 400.1,235.5 399.6,235.6 399.1,235.7 398.6,235.8 398.1,235.9 397.6,236.1 397.1,236.2 396.6,236.4 396.1,236.6 395.6,236.8 395.1,237.0 394.6,237.2 394.1,237.5 393.6,237.8 393.1,238.1 392.6,238.5 392.1,238.8 391.6,239.3 391.1,239.7 390.6,240.2 390.1,240.8 389.6,241.4 389.1,242.0 388.6,242.8 388.1,243.6 387.6,244.6 387.1,245.7 386.6,247.0 386.1,248.5 385.6,250.4 385.1,252.9 384.6,256.4 384.1,261.4 383.6,268.8 383.1,280.3 382.6,298.5 382.2,298.5 382.0,292.1"/><polygon fill="#ff3300" points="417.1,179.1 417.3,172.9 417.7,172.9 418.2,191.2 418.7,202.7 419.2,210.1 419.7,215.0 420.2,218.4 420.7,220.8 421.2,222.7 421.7,224.1 422.2,225.3 422.7,226.3 423.2,227.1 423.7,227.9 424.2,228.5 424.7,229.1 425.2,229.7 425.7,230.1 426.2,230.5 426.7,230.9 427.2,231.3 427.7,231.6 428.2,231.9 428.7,232.1 429.2,232.3 429.7,232.5 430.2,232.7 430.7,232.9 431.2,233.1 431.7,233.2 432.2,233.3 432.7,233.4 433.2,233.5 433.7,233.6 434.2,233.7 435.6,234.5 434.2,235.3 433.7,235.4 433.2,235.5 432.7,235.6 432.2,235.7 431.7,235.8 431.2,235.9 430.7,236.1 430.2,236.3 429.7,236.5 429.2,236.7 428.7,236.9 428.2,237.1 427.7,237.4 427.2,237.7 426.7,238.1 426.2,238.5 425.7,238.9 425.2,239.3 424.7,239.9 424.2,240.5 423.7,241.1 423.2,241.9 422.7,242.7 422.2,243.7 421.7,244.9 421.2,246.3 420.7,248.2 420.2,250.6 419.7,254.0 419.2,258.9 418.7,266.2 418.2,277.7 417.7,296.0 417.3,296.0 417.1,289.9"/><polygon fill="#ff3300" points="452.0,181.8 452.2,176.0 452.6,176.0 453.1,194.0 453.6,205.3 454.1,212.5 454.6,217.3 455.1,220.5 455.6,222.8 456.1,224.6 456.6,225.9 457.1,227.0 457.6,227.9 458.1,228.6 458.6,229.3 459.1,229.9 459.6,230.4 460.1,230.8 460.6,231.2 461.1,231.5 461.6,231.9 462.1,232.1 462.6,232.4 463.1,232.6 463.6,232.8 464.1,233.0 464.6,233.1 465.1,233.3 465.6,233.4 466.1,233.5 466.6,233.6 467.1,233.7 467.6,233.8 468.9,234.5 467.6,235.2 467.1,235.3 466.6,235.4 466.1,235.5 465.6,235.6 465.1,235.7 464.6,235.9 464.1,236.0 463.6,236.2 463.1,236.4 462.6,236.6 462.1,236.9 461.6,237.1 461.1,237.5 460.6,237.8 460.1,238.2 459.6,238.6 459.1,239.1 458.6,239.7 458.1,240.3 457.6,241.1 457.1,242.0 456.6,243.0 456.1,244.3 455.6,245.9 455.1,248.0 454.6,251.0 454.1,255.2 453.6,261.5 453.1,271.3 452.6,286.8 452.2,286.8 452.0,281.6"/><polygon fill="#ff3300" points="486.0,186.0 486.2,180.6 486.6,180.6 487.1,197.6 487.6,208.2 488.1,215.0 488.6,219.4 489.1,222.5 489.6,224.6 490.1,226.2 490.6,227.5 491.1,228.4 491.6,229.2 492.1,229.9 492.6,230.4 493.1,230.9 493.6,231.3 494.1,231.7 494.6,232.0 495.1,232.3 495.6,232.6 496.1,232.8 496.6,233.0 497.1,233.2 497.6,233.3 498.1,233.5 498.6,233.6 499.1,233.7 499.6,233.8 500.1,233.9 501.6,234.5 500.1,235.1 499.6,235.2 499.1,235.3 498.6,235.4 498.1,235.5 497.6,235.7 497.1,235.8 496.6,236.0 496.1,236.2 495.6,236.4 495.1,236.7 494.6,237.0 494.1,237.3 493.6,237.7 493.1,238.1 492.6,238.6 492.1,239.1 491.6,239.8 491.1,240.6 490.6,241.6 490.1,242.8 489.6,244.4 489.1,246.6 488.6,249.7 488.1,254.3 487.6,261.4 487.1,272.4 486.6,290.0 486.2,290.0 486.0,284.4"/><polygon fill="#ff3300" points="522.1,174.8 522.3,168.2 522.7,168.2 523.2,191.0 523.7,205.0 524.2,213.8 524.7,219.3 525.2,223.0 525.7,225.5 526.2,227.2 526.7,228.5 527.2,229.5 527.7,230.2 528.2,230.8 528.7,231.3 529.2,231.8 529.7,232.1 530.2,232.4 530.7,232.7 531.2,232.9 531.7,233.1 532.2,233.3 532.7,233.5 533.2,233.6 533.7,233.7 534.2,233.8 534.7,233.9 535.2,234.0 536.4,234.5 535.2,235.0 534.7,235.1 534.2,235.2 533.7,235.3 533.2,235.4 532.7,235.5 532.2,235.7 531.7,235.9 531.2,236.1 530.7,236.3 530.2,236.6 529.7,236.9 529.2,237.2 528.7,237.6 528.2,238.1 527.7,238.7 527.2,239.4 526.7,240.3 526.2,241.5 525.7,243.0 525.2,245.2 524.7,248.3 524.2,252.9 523.7,260.1 523.2,271.3 522.7,289.5 522.3,289.5 522.1,284.0"/><polygon fill="#ff3300" points="558.1,184.6 558.3,179.0 558.7,179.0 559.2,198.0 559.7,209.8 560.2,217.1 560.7,221.9 561.2,225.0 561.7,227.1 562.2,228.6 562.7,229.7 563.2,230.5 563.7,231.2 564.2,231.7 564.7,232.1 565.2,232.5 565.7,232.8 566.2,233.0 566.7,233.2 567.2,233.4 567.7,233.5 568.2,233.7 568.7,233.8 569.2,233.9 569.7,234.0 570.2,234.0 571.2,234.5 570.2,235.0 569.7,235.0 569.2,235.1 568.7,235.2 568.2,235.3 567.7,235.5 567.2,235.6 566.7,235.8 566.2,236.0 565.7,236.2 565.2,236.5 564.7,236.9 564.2,237.3 563.7,237.8 563.2,238.4 562.7,239.3 562.2,240.3 561.7,241.8 561.2,243.8 560.7,246.8 560.2,251.3 559.7,258.3 559.2,269.4 558.7,287.4 558.3,287.4 558.1,282.1"/><polygon fill="#ff3300" points="592.3,188.5 592.5,183.4 592.9,183.4 593.4,201.2 593.9,212.2 594.4,219.0 594.9,223.5 595.4,226.3 595.9,228.3 596.4,229.7 596.9,230.6 597.4,231.4 597.9,231.9 598.4,232.4 598.9,232.7 599.4,233.0 599.9,233.2 600.4,233.4 600.9,233.6 601.4,233.7 601.9,233.8 602.4,233.9 602.9,234.0 604.4,234.5 602.9,235.0 602.4,235.1 601.9,235.2 601.4,235.3 600.9,235.4 600.4,235.6 599.9,235.8 599.4,236.0 598.9,236.3 598.4,236.6 597.9,237.1 597.4,237.6 596.9,238.3 596.4,239.2 595.9,240.5 595.4,242.3 594.9,245.0 594.4,249.0 593.9,255.2 593.4,265.0 592.9,280.8 592.5,280.8 592.3,276.2"/><polygon fill="#ff3300" points="627.3,193.3 627.5,188.7 627.9,188.7 628.4,204.8 628.9,214.8 629.4,221.0 629.9,225.0 630.4,227.6 630.9,229.3 631.4,230.6 631.9,231.4 632.4,232.0 632.9,232.5 633.4,232.9 633.9,233.2 634.4,233.4 634.9,233.6 635.4,233.8 635.9,233.9 636.4,234.0 636.9,234.1 637.4,234.1 638.4,234.5 637.4,234.9 636.9,234.9 636.4,235.0 635.9,235.1 635.4,235.3 634.9,235.4 634.4,235.6 633.9,235.8 633.4,236.1 632.9,236.5 632.4,237.0 631.9,237.6 631.4,238.5 630.9,239.8 630.4,241.6 629.9,244.4 629.4,248.6 628.9,255.3 628.4,266.0 627.9,283.4 627.5,283.4 627.3,278.5"/><polygon fill="#ff3300" points="661.5,193.3 661.7,188.7 662.1,188.7 662.6,205.3 663.1,215.4 663.6,221.8 664.1,225.8 664.6,228.3 665.1,230.0 665.6,231.2 666.1,232.0 666.6,232.6 667.1,233.0 667.6,233.3 668.1,233.5 668.6,233.7 669.1,233.9 669.6,234.0 670.1,234.1 670.6,234.2 671.8,234.5 670.6,234.8 670.1,234.9 669.6,235.0 669.1,235.1 668.6,235.3 668.1,235.5 667.6,235.7 667.1,236.0 666.6,236.4 666.1,237.0 665.6,237.8 665.1,238.9 664.6,240.6 664.1,243.1 663.6,247.1 663.1,253.3 662.6,263.3 662.1,279.5 661.7,279.5 661.5,275.0"/><polygon fill="#ff3300" points="696.5,192.6 696.7,187.9 697.1,187.9 697.6,205.2 698.1,215.7 698.6,222.2 699.1,226.3 699.6,228.9 700.1,230.6 700.6,231.7 701.1,232.4 701.6,233.0 702.1,233.3 702.6,233.6 703.1,233.8 703.6,233.9 704.1,234.1 704.6,234.2 706.0,234.5 704.6,234.8 704.1,234.9 703.6,235.0 703.1,235.2 702.6,235.4 702.1,235.6 701.6,236.0 701.1,236.5 700.6,237.2 700.1,238.2 699.6,239.8 699.1,242.2 698.6,245.9 698.1,251.8 697.6,261.3 697.1,276.8 696.7,276.8 696.5,272.6"/><polygon fill="#ff3300" points="730.2,202.0 730.4,198.4 730.8,198.4 731.3,211.7 731.8,219.9 732.3,224.9 732.8,228.1 733.3,230.2 733.8,231.5 734.3,232.4 734.8,233.0 735.3,233.4 735.8,233.7 736.3,233.9 736.8,234.0 737.3,234.1 737.8,234.2 739.0,234.5 737.8,234.8 737.3,234.9 736.8,235.0 736.3,235.1 735.8,235.4 735.3,235.7 734.8,236.1 734.3,236.7 733.8,237.7 733.3,239.1 732.8,241.3 732.3,244.8 731.8,250.4 731.3,259.4 730.8,274.2 730.4,274.2 730.2,270.2"/><polygon fill="#ff3300" points="765.5,199.7 765.7,195.8 766.1,195.8 766.6,210.5 767.1,219.4 767.6,224.9 768.1,228.3 768.6,230.4 769.1,231.8 769.6,232.6 770.1,233.2 770.6,233.6 771.1,233.8 771.6,234.0 772.1,234.2 772.6,234.2 773.6,234.5 772.6,234.8 772.1,234.8 771.6,235.0 771.1,235.1 770.6,235.4 770.1,235.8 769.6,236.3 769.1,237.1 768.6,238.4 768.1,240.4 767.6,243.5 767.1,248.6 766.6,256.8 766.1,270.3 765.7,270.3 765.5,266.7"/><polygon fill="#ff3300" points="800.1,202.9 800.3,199.4 800.7,199.4 801.2,212.8 801.7,221.0 802.2,226.0 802.7,229.1 803.2,231.0 803.7,232.2 804.2,233.0 804.7,233.5 805.2,233.8 805.7,234.0 806.2,234.2 807.6,234.5 806.2,234.8 805.7,235.0 805.2,235.2 804.7,235.5 804.2,236.0 803.7,236.7 803.2,237.8 802.7,239.6 802.2,242.5 801.7,247.1 801.2,254.6 800.7,267.0 800.3,267.0 800.1,263.8"/><polygon fill="#ff3300" points="834.1,206.2 834.3,203.0 834.7,203.0 835.2,215.2 835.7,222.6 836.2,227.1 836.7,229.8 837.2,231.5 837.7,232.6 838.2,233.3 838.7,233.7 839.2,234.0 839.7,234.1 841.1,234.5 839.7,234.9 839.2,235.0 838.7,235.3 838.2,235.7 837.7,236.4 837.2,237.4 836.7,239.1 836.2,241.9 835.7,246.3 835.2,253.7 834.7,265.7 834.3,265.7 834.1,262.6"/><polygon fill="#ff3300" points="869.2,207.9 869.4,205.0 869.8,205.0 870.3,216.5 870.8,223.5 871.3,227.7 871.8,230.3 872.3,231.9 872.8,232.9 873.3,233.5 873.8,233.8 874.3,234.1 875.7,234.5 874.3,234.9 873.8,235.2 873.3,235.5 872.8,236.1 872.3,237.1 871.8,238.7 871.3,241.3 870.8,245.6 870.3,252.6 869.8,264.3 869.4,264.3 869.2,261.3"/><polygon fill="#ff3300" points="903.4,207.9 903.6,205.0 904.0,205.0 904.5,216.7 905.0,223.7 905.5,228.0 906.0,230.5 906.5,232.1 907.0,233.0 907.5,233.6 908.0,233.9 909.5,234.5 908.0,235.0 907.5,235.3 907.0,235.8 906.5,236.6 906.0,237.9 905.5,240.1 905.0,243.7 904.5,249.6 904.0,259.4 903.6,259.4 903.4,256.9"/><polygon fill="#ff3300" points="937.7,211.1 937.9,208.5 938.3,208.5 938.8,218.9 939.3,225.1 939.8,228.9 940.3,231.1 940.8,232.4 941.3,233.3 941.8,233.7 942.3,234.0 943.4,234.5 942.3,234.9 941.8,235.2 941.3,235.6 940.8,236.3 940.3,237.5 939.8,239.5 939.3,242.8 938.8,248.3 938.3,257.4 937.9,257.4 937.7,255.1"/><polygon fill="#ff3300" points="972.2,214.1 972.4,211.8 972.8,211.8 973.3,221.0 973.8,226.4 974.3,229.7 974.8,231.6 975.3,232.8 975.8,233.5 976.3,233.9 977.5,234.5 976.3,235.1 975.8,235.5 975.3,236.2 974.8,237.4 974.3,239.4 973.8,242.6 973.3,248.2 972.8,257.4 972.4,257.4 972.2,255.1"/><polygon fill="#ff3300" points="1006.7,216.1 1006.9,214.0 1007.3,214.0 1007.8,222.4 1008.3,227.3 1008.8,230.2 1009.3,232.0 1009.8,233.0 1010.3,233.6 1011.7,234.5 1010.3,235.5 1009.8,236.2 1009.3,237.3 1008.8,239.3 1008.3,242.5 1007.8,248.1 1007.3,257.4 1006.9,257.4 1006.7,255.1"/><rect x="295.5" y="159.5" width="763.0" height="150.0" fill="none" stroke="#7d7d7d" stroke-width="1"/></svg>
<div class="t" style="left:274.3px;top:161px;font-size:11px;color:#222;transform:scaleX(0.857);">1.0</div>
<div class="t" style="left:274.3px;top:175px;font-size:11px;color:#222;transform:scaleX(0.857);">0.8</div>
<div class="t" style="left:274.3px;top:189px;font-size:11px;color:#222;transform:scaleX(0.857);">0.6</div>
<div class="t" style="left:274.3px;top:203px;font-size:11px;color:#222;transform:scaleX(0.857);">0.4</div>
<div class="t" style="left:274.3px;top:217px;font-size:11px;color:#222;transform:scaleX(0.857);">0.2</div>
<div class="t" style="left:267.3px;top:230px;font-size:11px;color:#222;transform:scaleX(1.025);">-0.0</div>
<div class="t" style="left:267.3px;top:244px;font-size:11px;color:#222;transform:scaleX(1.025);">-0.2</div>
<div class="t" style="left:267.3px;top:258px;font-size:11px;color:#222;transform:scaleX(1.025);">-0.4</div>
<div class="t" style="left:267.3px;top:272px;font-size:11px;color:#222;transform:scaleX(1.025);">-0.6</div>
<div class="t" style="left:267.3px;top:285px;font-size:11px;color:#222;transform:scaleX(1.025);">-0.8</div>
<div class="t" style="left:267.3px;top:299px;font-size:11px;color:#222;transform:scaleX(1.025);">-1.0</div>
<svg class="abs" style="left:294px;top:319px" width="766" height="152" viewBox="294 319 766 152"><rect x="295.5" y="320.5" width="763.0" height="149.0" fill="#fff"/><rect x="311" y="320.5" width="32" height="149.0" fill="#f8dd8e"/><rect x="347" y="320.5" width="30" height="149.0" fill="#dfe6fc"/><rect x="382" y="320.5" width="28" height="149.0" fill="#b8c0de"/><rect x="417" y="320.5" width="26" height="149.0" fill="#dfe6fc"/><rect x="452" y="320.5" width="24" height="149.0" fill="#b8c0de"/><rect x="486" y="320.5" width="24" height="149.0" fill="#dfe6fc"/><rect x="522" y="320.5" width="22" height="149.0" fill="#b8c0de"/><rect x="558" y="320.5" width="20" height="149.0" fill="#dfe6fc"/><rect x="592" y="320.5" width="20" height="149.0" fill="#b8c0de"/><rect x="627" y="320.5" width="17" height="149.0" fill="#dfe6fc"/><rect x="661" y="320.5" width="18" height="149.0" fill="#b8c0de"/><rect x="696" y="320.5" width="15" height="149.0" fill="#dfe6fc"/><rect x="730" y="320.5" width="14" height="149.0" fill="#b8c0de"/><rect x="765" y="320.5" width="13" height="149.0" fill="#dfe6fc"/><rect x="800" y="320.5" width="11" height="149.0" fill="#b8c0de"/><rect x="834" y="320.5" width="10" height="149.0" fill="#dfe6fc"/><rect x="869" y="320.5" width="9" height="149.0" fill="#b8c0de"/><rect x="903" y="320.5" width="8" height="149.0" fill="#dfe6fc"/><rect x="938" y="320.5" width="7" height="149.0" fill="#b8c0de"/><rect x="972" y="320.5" width="7" height="149.0" fill="#dfe6fc"/><rect x="1007" y="320.5" width="6" height="149.0" fill="#b8c0de"/><rect x="295.5" y="326" width="763.0" height="1" fill="#d2d2d2" fill-opacity="0.9"/><rect x="295.5" y="340" width="763.0" height="1" fill="#d2d2d2" fill-opacity="0.9"/><rect x="295.5" y="354" width="763.0" height="1" fill="#d2d2d2" fill-opacity="0.9"/><rect x="295.5" y="367" width="763.0" height="1" fill="#d2d2d2" fill-opacity="0.9"/><rect x="295.5" y="381" width="763.0" height="1" fill="#d2d2d2" fill-opacity="0.9"/><rect x="295.5" y="409" width="763.0" height="1" fill="#d2d2d2" fill-opacity="0.9"/><rect x="295.5" y="423" width="763.0" height="1" fill="#d2d2d2" fill-opacity="0.9"/><rect x="295.5" y="436" width="763.0" height="1" fill="#d2d2d2" fill-opacity="0.9"/><rect x="295.5" y="450" width="763.0" height="1" fill="#d2d2d2" fill-opacity="0.9"/><rect x="295.5" y="464" width="763.0" height="1" fill="#d2d2d2" fill-opacity="0.9"/><rect x="311" y="320.5" width="1" height="149.0" fill="#8a7c50"/><rect x="343" y="320.5" width="1" height="149.0" fill="#8a7c50"/><rect x="347" y="320.5" width="1" height="149.0" fill="#8a8a8a"/><rect x="377" y="320.5" width="1" height="149.0" fill="#8a8a8a"/><rect x="382" y="320.5" width="1" height="149.0" fill="#8a8a8a"/><rect x="410" y="320.5" width="1" height="149.0" fill="#8a8a8a"/><rect x="417" y="320.5" width="1" height="149.0" fill="#8a8a8a"/><rect x="443" y="320.5" width="1" height="149.0" fill="#8a8a8a"/><rect x="452" y="320.5" width="1" height="149.0" fill="#8a8a8a"/><rect x="476" y="320.5" width="1" height="149.0" fill="#8a8a8a"/><rect x="486" y="320.5" width="1" height="149.0" fill="#8a8a8a"/><rect x="510" y="320.5" width="1" height="149.0" fill="#8a8a8a"/><rect x="522" y="320.5" width="1" height="149.0" fill="#8a8a8a"/><rect x="544" y="320.5" width="1" height="149.0" fill="#8a8a8a"/><rect x="558" y="320.5" width="1" height="149.0" fill="#8a8a8a"/><rect x="578" y="320.5" width="1" height="149.0" fill="#8a8a8a"/><rect x="592" y="320.5" width="1" height="149.0" fill="#8a8a8a"/><rect x="612" y="320.5" width="1" height="149.0" fill="#8a8a8a"/><rect x="627" y="320.5" width="1" height="149.0" fill="#8a8a8a"/><rect x="644" y="320.5" width="1" height="149.0" fill="#8a8a8a"/><rect x="661" y="320.5" width="1" height="149.0" fill="#8a8a8a"/><rect x="679" y="320.5" width="1" height="149.0" fill="#8a8a8a"/><rect x="696" y="320.5" width="1" height="149.0" fill="#8a8a8a"/><rect x="711" y="320.5" width="1" height="149.0" fill="#8a8a8a"/><rect x="730" y="320.5" width="1" height="149.0" fill="#8a8a8a"/><rect x="744" y="320.5" width="1" height="149.0" fill="#8a8a8a"/><rect x="765" y="320.5" width="1" height="149.0" fill="#8a8a8a"/><rect x="778" y="320.5" width="1" height="149.0" fill="#8a8a8a"/><rect x="800" y="320.5" width="1" height="149.0" fill="#8a8a8a"/><rect x="811" y="320.5" width="1" height="149.0" fill="#8a8a8a"/><rect x="834" y="320.5" width="1" height="149.0" fill="#8a8a8a"/><rect x="844" y="320.5" width="1" height="149.0" fill="#8a8a8a"/><rect x="869" y="320.5" width="1" height="149.0" fill="#8a8a8a"/><rect x="878" y="320.5" width="1" height="149.0" fill="#8a8a8a"/><rect x="903" y="320.5" width="1" height="149.0" fill="#8a8a8a"/><rect x="911" y="320.5" width="1" height="149.0" fill="#8a8a8a"/><rect x="938" y="320.5" width="1" height="149.0" fill="#8a8a8a"/><rect x="945" y="320.5" width="1" height="149.0" fill="#8a8a8a"/><rect x="972" y="320.5" width="1" height="149.0" fill="#8a8a8a"/><rect x="979" y="320.5" width="1" height="149.0" fill="#8a8a8a"/><rect x="1007" y="320.5" width="1" height="149.0" fill="#8a8a8a"/><rect x="1013" y="320.5" width="1" height="149.0" fill="#8a8a8a"/><rect x="295.5" y="395" width="763.0" height="1" fill="#e2380a"/><polygon fill="#ff3300" points="311.3,334.7 311.5,327.9 311.9,327.9 312.4,345.0 312.9,355.9 313.4,363.0 313.9,367.9 314.4,371.4 314.9,374.0 315.4,376.1 315.9,377.8 316.4,379.3 316.9,380.6 317.4,381.7 317.9,382.8 318.4,383.7 318.9,384.6 319.4,385.4 319.9,386.1 320.4,386.8 320.9,387.5 321.4,388.1 321.9,388.6 322.4,389.1 322.9,389.6 323.4,390.0 323.9,390.4 324.4,390.8 324.9,391.1 325.4,391.4 325.9,391.7 326.4,392.0 326.9,392.3 327.4,392.5 327.9,392.7 328.4,392.9 328.9,393.1 329.4,393.3 329.9,393.4 330.4,393.6 330.9,393.7 331.4,393.9 331.9,394.0 332.4,394.1 332.9,394.2 333.4,394.3 333.9,394.4 335.3,395.5 333.9,396.6 333.4,396.7 332.9,396.8 332.4,396.9 331.9,397.0 331.4,397.1 330.9,397.3 330.4,397.4 329.9,397.6 329.4,397.7 328.9,397.9 328.4,398.1 327.9,398.3 327.4,398.5 326.9,398.7 326.4,399.0 325.9,399.3 325.4,399.6 324.9,399.9 324.4,400.2 323.9,400.6 323.4,401.0 322.9,401.4 322.4,401.9 321.9,402.4 321.4,402.9 320.9,403.5 320.4,404.2 319.9,404.8 319.4,405.6 318.9,406.4 318.4,407.3 317.9,408.2 317.4,409.2 316.9,410.3 316.4,411.6 315.9,413.0 315.4,414.6 314.9,416.4 314.4,418.7 313.9,421.6 313.4,425.4 312.9,430.8 312.4,438.7 311.9,450.7 311.5,450.7 311.3,445.2"/><polygon fill="#ff3300" points="346.9,340.6 347.1,334.5 347.5,334.5 348.0,350.3 348.5,360.4 349.0,367.0 349.5,371.5 350.0,374.8 350.5,377.2 351.0,379.1 351.5,380.7 352.0,382.1 352.5,383.2 353.0,384.3 353.5,385.2 354.0,386.0 354.5,386.8 355.0,387.5 355.5,388.1 356.0,388.7 356.5,389.3 357.0,389.8 357.5,390.2 358.0,390.7 358.5,391.0 359.0,391.4 359.5,391.7 360.0,392.0 360.5,392.3 361.0,392.6 361.5,392.8 362.0,393.0 362.5,393.2 363.0,393.4 363.5,393.6 364.0,393.7 364.5,393.9 365.0,394.0 365.5,394.1 366.0,394.2 366.5,394.3 367.0,394.4 367.5,394.5 368.9,395.5 367.5,396.5 367.0,396.6 366.5,396.7 366.0,396.8 365.5,396.9 365.0,397.0 364.5,397.1 364.0,397.3 363.5,397.4 363.0,397.6 362.5,397.8 362.0,398.0 361.5,398.2 361.0,398.4 360.5,398.7 360.0,399.0 359.5,399.3 359.0,399.6 358.5,400.0 358.0,400.3 357.5,400.8 357.0,401.2 356.5,401.7 356.0,402.3 355.5,402.8 355.0,403.5 354.5,404.2 354.0,404.9 353.5,405.8 353.0,406.7 352.5,407.7 352.0,408.8 351.5,410.1 351.0,411.6 350.5,413.3 350.0,415.3 349.5,418.0 349.0,421.4 348.5,426.3 348.0,433.3 347.5,444.0 347.1,444.0 346.9,439.1"/><polygon fill="#ff3300" points="382.0,346.4 382.2,341.0 382.6,341.0 383.1,355.4 383.6,364.5 384.1,370.6 384.6,374.8 385.1,377.7 385.6,380.0 386.1,381.7 386.6,383.2 387.1,384.4 387.6,385.5 388.1,386.4 388.6,387.2 389.1,388.0 389.6,388.6 390.1,389.2 390.6,389.8 391.1,390.3 391.6,390.7 392.1,391.2 392.6,391.5 393.1,391.9 393.6,392.2 394.1,392.5 394.6,392.8 395.1,393.0 395.6,393.2 396.1,393.4 396.6,393.6 397.1,393.8 397.6,393.9 398.1,394.1 398.6,394.2 399.1,394.3 399.6,394.4 400.1,394.5 400.6,394.6 401.1,394.7 402.2,395.5 401.1,396.3 400.6,396.4 400.1,396.5 399.6,396.6 399.1,396.7 398.6,396.8 398.1,396.9 397.6,397.1 397.1,397.2 396.6,397.4 396.1,397.6 395.6,397.8 395.1,398.0 394.6,398.2 394.1,398.5 393.6,398.8 393.1,399.1 392.6,399.5 392.1,399.8 391.6,400.3 391.1,400.7 390.6,401.2 390.1,401.8 389.6,402.4 389.1,403.0 388.6,403.8 388.1,404.6 387.6,405.6 387.1,406.6 386.6,407.9 386.1,409.4 385.6,411.2 385.1,413.6 384.6,416.8 384.1,421.3 383.6,428.0 383.1,438.2 382.6,454.4 382.2,454.4 382.0,448.5"/><polygon fill="#ff3300" points="417.1,341.5 417.3,335.5 417.7,335.5 418.2,353.2 418.7,364.3 419.2,371.5 419.7,376.2 420.2,379.5 420.7,381.9 421.2,383.7 421.7,385.2 422.2,386.3 422.7,387.3 423.2,388.2 423.7,388.9 424.2,389.5 424.7,390.1 425.2,390.7 425.7,391.1 426.2,391.5 426.7,391.9 427.2,392.3 427.7,392.6 428.2,392.9 428.7,393.1 429.2,393.3 429.7,393.5 430.2,393.7 430.7,393.9 431.2,394.1 431.7,394.2 432.2,394.3 432.7,394.4 433.2,394.5 433.7,394.6 434.2,394.7 435.6,395.5 434.2,396.3 433.7,396.4 433.2,396.5 432.7,396.6 432.2,396.7 431.7,396.8 431.2,396.9 430.7,397.1 430.2,397.3 429.7,397.5 429.2,397.7 428.7,397.9 428.2,398.1 427.7,398.4 427.2,398.7 426.7,399.1 426.2,399.5 425.7,399.9 425.2,400.3 424.7,400.9 424.2,401.5 423.7,402.1 423.2,402.8 422.7,403.7 422.2,404.7 421.7,405.8 421.2,407.2 420.7,409.0 420.2,411.3 419.7,414.5 419.2,419.0 418.7,425.8 418.2,436.2 417.7,452.8 417.3,452.8 417.1,447.1"/><polygon fill="#ff3300" points="452.0,343.6 452.2,337.8 452.6,337.8 453.1,355.5 453.6,366.6 454.1,373.7 454.6,378.4 455.1,381.6 455.6,383.9 456.1,385.6 456.6,386.9 457.1,388.0 457.6,388.9 458.1,389.6 458.6,390.3 459.1,390.9 459.6,391.4 460.1,391.8 460.6,392.2 461.1,392.5 461.6,392.9 462.1,393.1 462.6,393.4 463.1,393.6 463.6,393.8 464.1,394.0 464.6,394.1 465.1,394.3 465.6,394.4 466.1,394.5 466.6,394.6 467.1,394.7 467.6,394.8 468.9,395.5 467.6,396.2 467.1,396.3 466.6,396.4 466.1,396.5 465.6,396.6 465.1,396.7 464.6,396.9 464.1,397.0 463.6,397.2 463.1,397.4 462.6,397.6 462.1,397.9 461.6,398.1 461.1,398.5 460.6,398.8 460.1,399.2 459.6,399.6 459.1,400.1 458.6,400.7 458.1,401.3 457.6,402.1 457.1,402.9 456.6,403.9 456.1,405.2 455.6,406.7 455.1,408.7 454.6,411.5 454.1,415.4 453.6,421.2 453.1,430.0 452.6,443.9 452.2,443.9 452.0,439.1"/><polygon fill="#ff3300" points="486.0,347.4 486.2,342.0 486.6,342.0 487.1,358.8 487.6,369.3 488.1,376.1 488.6,380.5 489.1,383.5 489.6,385.7 490.1,387.2 490.6,388.5 491.1,389.4 491.6,390.2 492.1,390.9 492.6,391.4 493.1,391.9 493.6,392.3 494.1,392.7 494.6,393.0 495.1,393.3 495.6,393.6 496.1,393.8 496.6,394.0 497.1,394.2 497.6,394.3 498.1,394.5 498.6,394.6 499.1,394.7 499.6,394.8 500.1,394.9 501.6,395.5 500.1,396.1 499.6,396.2 499.1,396.3 498.6,396.4 498.1,396.5 497.6,396.7 497.1,396.8 496.6,397.0 496.1,397.2 495.6,397.4 495.1,397.7 494.6,398.0 494.1,398.3 493.6,398.7 493.1,399.1 492.6,399.6 492.1,400.1 491.6,400.8 491.1,401.6 490.6,402.5 490.1,403.7 489.6,405.3 489.1,407.4 488.6,410.4 488.1,414.7 487.6,421.2 487.1,431.5 486.6,447.8 486.2,447.8 486.0,442.6"/><polygon fill="#ff3300" points="522.1,337.3 522.3,330.8 522.7,330.8 523.2,352.9 523.7,366.6 524.2,375.1 524.7,380.5 525.2,384.1 525.7,386.6 526.2,388.3 526.7,389.5 527.2,390.5 527.7,391.2 528.2,391.8 528.7,392.3 529.2,392.8 529.7,393.1 530.2,393.4 530.7,393.7 531.2,393.9 531.7,394.1 532.2,394.3 532.7,394.5 533.2,394.6 533.7,394.7 534.2,394.8 534.7,394.9 535.2,395.0 536.4,395.5 535.2,396.0 534.7,396.1 534.2,396.2 533.7,396.3 533.2,396.4 532.7,396.5 532.2,396.7 531.7,396.9 531.2,397.1 530.7,397.3 530.2,397.6 529.7,397.9 529.2,398.2 528.7,398.6 528.2,399.1 527.7,399.7 527.2,400.4 526.7,401.3 526.2,402.4 525.7,403.9 525.2,406.0 524.7,409.0 524.2,413.4 523.7,420.2 523.2,430.9 522.7,448.0 522.3,448.0 522.1,442.8"/><polygon fill="#ff3300" points="558.1,346.4 558.3,341.0 558.7,341.0 559.2,359.6 559.7,371.1 560.2,378.3 560.7,383.0 561.2,386.1 561.7,388.2 562.2,389.6 562.7,390.7 563.2,391.5 563.7,392.2 564.2,392.7 564.7,393.1 565.2,393.5 565.7,393.8 566.2,394.0 566.7,394.2 567.2,394.4 567.7,394.5 568.2,394.7 568.7,394.8 569.2,394.9 569.7,395.0 570.2,395.0 571.2,395.5 570.2,396.0 569.7,396.0 569.2,396.1 568.7,396.2 568.2,396.3 567.7,396.5 567.2,396.6 566.7,396.8 566.2,397.0 565.7,397.2 565.2,397.5 564.7,397.9 564.2,398.3 563.7,398.8 563.2,399.4 562.7,400.2 562.2,401.2 561.7,402.6 561.2,404.6 560.7,407.5 560.2,411.7 559.7,418.3 559.2,428.7 558.7,445.5 558.3,445.5 558.1,440.5"/><polygon fill="#ff3300" points="592.3,349.8 592.5,344.7 592.9,344.7 593.4,362.4 593.9,373.3 594.4,380.1 594.9,384.5 595.4,387.4 595.9,389.3 596.4,390.7 596.9,391.6 597.4,392.4 597.9,392.9 598.4,393.4 598.9,393.7 599.4,394.0 599.9,394.2 600.4,394.4 600.9,394.6 601.4,394.7 601.9,394.8 602.4,394.9 602.9,395.0 604.4,395.5 602.9,396.0 602.4,396.1 601.9,396.2 601.4,396.3 600.9,396.4 600.4,396.6 599.9,396.8 599.4,397.0 598.9,397.3 598.4,397.6 597.9,398.0 597.4,398.6 596.9,399.3 596.4,400.2 595.9,401.4 595.4,403.1 594.9,405.6 594.4,409.4 593.9,415.2 593.4,424.3 592.9,439.0 592.5,439.0 592.3,434.6"/><polygon fill="#ff3300" points="627.3,355.3 627.5,350.8 627.9,350.8 628.4,366.5 628.9,376.2 629.4,382.2 629.9,386.1 630.4,388.7 630.9,390.4 631.4,391.6 631.9,392.4 632.4,393.1 632.9,393.5 633.4,393.9 633.9,394.2 634.4,394.4 634.9,394.6 635.4,394.8 635.9,394.9 636.4,395.0 636.9,395.1 637.4,395.1 638.4,395.5 637.4,395.9 636.9,395.9 636.4,396.0 635.9,396.1 635.4,396.3 634.9,396.4 634.4,396.6 633.9,396.8 633.4,397.1 632.9,397.5 632.4,398.0 631.9,398.6 631.4,399.5 630.9,400.7 630.4,402.5 629.9,405.2 629.4,409.3 628.9,415.8 628.4,426.2 627.9,443.0 627.5,443.0 627.3,438.2"/><polygon fill="#ff3300" points="661.5,354.6 661.7,350.0 662.1,350.0 662.6,366.4 663.1,376.5 663.6,382.8 664.1,386.8 664.6,389.4 665.1,391.0 665.6,392.2 666.1,393.0 666.6,393.6 667.1,394.0 667.6,394.3 668.1,394.5 668.6,394.7 669.1,394.9 669.6,395.0 670.1,395.1 670.6,395.2 671.8,395.5 670.6,395.8 670.1,395.9 669.6,396.0 669.1,396.1 668.6,396.3 668.1,396.5 667.6,396.7 667.1,397.0 666.6,397.4 666.1,398.0 665.6,398.8 665.1,399.9 664.6,401.5 664.1,404.0 663.6,407.8 663.1,413.8 662.6,423.4 662.1,439.0 661.7,439.0 661.5,434.6"/><polygon fill="#ff3300" points="696.5,353.6 696.7,349.0 697.1,349.0 697.6,366.2 698.1,376.7 698.6,383.2 699.1,387.3 699.6,389.9 700.1,391.6 700.6,392.7 701.1,393.4 701.6,394.0 702.1,394.3 702.6,394.6 703.1,394.8 703.6,394.9 704.1,395.1 704.6,395.2 706.0,395.5 704.6,395.8 704.1,395.9 703.6,396.0 703.1,396.2 702.6,396.4 702.1,396.6 701.6,397.0 701.1,397.5 700.6,398.2 700.1,399.2 699.6,400.7 699.1,403.0 698.6,406.6 698.1,412.3 697.6,421.4 697.1,436.3 696.7,436.3 696.5,432.2"/><polygon fill="#ff3300" points="730.2,363.6 730.4,360.0 730.8,360.0 731.3,373.1 731.8,381.1 732.3,386.1 732.8,389.2 733.3,391.2 733.8,392.5 734.3,393.4 734.8,394.0 735.3,394.4 735.8,394.7 736.3,394.9 736.8,395.0 737.3,395.1 737.8,395.2 739.0,395.5 737.8,395.8 737.3,395.9 736.8,396.0 736.3,396.1 735.8,396.4 735.3,396.7 734.8,397.1 734.3,397.7 733.8,398.7 733.3,400.1 732.8,402.3 732.3,405.8 731.8,411.3 731.3,420.3 730.8,435.0 730.4,435.0 730.2,431.1"/><polygon fill="#ff3300" points="765.5,361.7 765.7,357.9 766.1,357.9 766.6,372.1 767.1,380.8 767.6,386.1 768.1,389.4 768.6,391.5 769.1,392.8 769.6,393.7 770.1,394.2 770.6,394.6 771.1,394.9 771.6,395.0 772.1,395.2 772.6,395.2 773.6,395.5 772.6,395.8 772.1,395.8 771.6,396.0 771.1,396.1 770.6,396.4 770.1,396.8 769.6,397.3 769.1,398.1 768.6,399.4 768.1,401.4 767.6,404.6 767.1,409.7 766.6,418.0 766.1,431.6 765.7,431.6 765.5,428.0"/><polygon fill="#ff3300" points="800.1,364.5 800.3,361.1 800.7,361.1 801.2,374.2 801.7,382.2 802.2,387.1 802.7,390.2 803.2,392.0 803.7,393.2 804.2,394.0 804.7,394.5 805.2,394.8 805.7,395.0 806.2,395.2 807.6,395.5 806.2,395.8 805.7,396.0 805.2,396.2 804.7,396.5 804.2,396.9 803.7,397.7 803.2,398.8 802.7,400.5 802.2,403.3 801.7,407.9 801.2,415.3 800.7,427.4 800.3,427.4 800.1,424.2"/><polygon fill="#ff3300" points="834.1,367.1 834.3,363.9 834.7,363.9 835.2,376.1 835.7,383.5 836.2,388.0 836.7,390.8 837.2,392.5 837.7,393.6 838.2,394.3 838.7,394.7 839.2,395.0 839.7,395.1 841.1,395.5 839.7,395.9 839.2,396.0 838.7,396.3 838.2,396.7 837.7,397.3 837.2,398.4 836.7,400.0 836.2,402.6 835.7,406.9 835.2,413.9 834.7,425.5 834.3,425.5 834.1,422.5"/><polygon fill="#ff3300" points="869.2,369.5 869.4,366.6 869.8,366.6 870.3,377.9 870.8,384.7 871.3,388.9 871.8,391.4 872.3,392.9 872.8,393.9 873.3,394.5 873.8,394.9 874.3,395.1 875.7,395.5 874.3,395.9 873.8,396.2 873.3,396.5 872.8,397.2 872.3,398.1 871.8,399.7 871.3,402.4 870.8,406.7 870.3,413.8 869.8,425.5 869.4,425.5 869.2,422.5"/><polygon fill="#ff3300" points="903.4,369.5 903.6,366.6 904.0,366.6 904.5,378.0 905.0,384.9 905.5,389.1 906.0,391.6 906.5,393.1 907.0,394.0 907.5,394.6 908.0,394.9 909.5,395.5 908.0,396.0 907.5,396.3 907.0,396.8 906.5,397.6 906.0,398.9 905.5,401.0 905.0,404.5 904.5,410.4 904.0,420.0 903.6,420.0 903.4,417.6"/><polygon fill="#ff3300" points="937.7,372.0 937.9,369.4 938.3,369.4 938.8,379.8 939.3,386.1 939.8,389.8 940.3,392.1 940.8,393.4 941.3,394.3 941.8,394.7 942.3,395.0 943.4,395.5 942.3,395.9 941.8,396.2 941.3,396.6 940.8,397.3 940.3,398.6 939.8,400.5 939.3,403.9 938.8,409.4 938.3,418.6 937.9,418.6 937.7,416.3"/><polygon fill="#ff3300" points="972.2,375.2 972.4,373.0 972.8,373.0 973.3,382.1 973.8,387.5 974.3,390.7 974.8,392.6 975.3,393.8 975.8,394.5 976.3,394.9 977.5,395.5 976.3,396.1 975.8,396.5 975.3,397.3 974.8,398.4 974.3,400.4 973.8,403.7 973.3,409.3 972.8,418.6 972.4,418.6 972.2,416.3"/><polygon fill="#ff3300" points="1006.7,377.1 1006.9,375.0 1007.3,375.0 1007.8,383.4 1008.3,388.3 1008.8,391.2 1009.3,393.0 1009.8,394.0 1010.3,394.6 1011.7,395.5 1010.3,396.5 1009.8,397.1 1009.3,398.2 1008.8,400.1 1008.3,403.3 1007.8,408.7 1007.3,417.8 1006.9,417.8 1006.7,415.6"/><rect x="295.5" y="320.5" width="763.0" height="149.0" fill="none" stroke="#7d7d7d" stroke-width="1"/></svg>
<div class="t" style="left:274.3px;top:322px;font-size:11px;color:#222;transform:scaleX(0.857);">1.0</div>
<div class="t" style="left:274.3px;top:336px;font-size:11px;color:#222;transform:scaleX(0.857);">0.8</div>
<div class="t" style="left:274.3px;top:350px;font-size:11px;color:#222;transform:scaleX(0.857);">0.6</div>
<div class="t" style="left:274.3px;top:364px;font-size:11px;color:#222;transform:scaleX(0.857);">0.4</div>
<div class="t" style="left:274.3px;top:377px;font-size:11px;color:#222;transform:scaleX(0.857);">0.2</div>
<div class="t" style="left:267.3px;top:391px;font-size:11px;color:#222;transform:scaleX(1.025);">-0.0</div>
<div class="t" style="left:267.3px;top:405px;font-size:11px;color:#222;transform:scaleX(1.025);">-0.2</div>
<div class="t" style="left:267.3px;top:419px;font-size:11px;color:#222;transform:scaleX(1.025);">-0.4</div>
<div class="t" style="left:267.3px;top:433px;font-size:11px;color:#222;transform:scaleX(1.025);">-0.6</div>
<div class="t" style="left:267.3px;top:447px;font-size:11px;color:#222;transform:scaleX(1.025);">-0.8</div>
<div class="t" style="left:267.3px;top:460px;font-size:11px;color:#222;transform:scaleX(1.025);">-1.0</div>
<div class="t" style="left:335.2px;top:473px;font-size:11px;color:#222;transform:scaleX(0.890);">5</div>
<div class="t" style="left:375.3px;top:473px;font-size:11px;color:#222;transform:scaleX(0.890);">10</div>
<div class="t" style="left:418.4px;top:473px;font-size:11px;color:#222;transform:scaleX(0.890);">15</div>
<div class="t" style="left:461.6px;top:473px;font-size:11px;color:#222;transform:scaleX(0.890);">20</div>
<div class="t" style="left:504.8px;top:473px;font-size:11px;color:#222;transform:scaleX(0.890);">25</div>
<div class="t" style="left:547.9px;top:473px;font-size:11px;color:#222;transform:scaleX(0.890);">30</div>
<div class="t" style="left:591.1px;top:473px;font-size:11px;color:#222;transform:scaleX(0.890);">35</div>
<div class="t" style="left:634.2px;top:473px;font-size:11px;color:#222;transform:scaleX(0.890);">40</div>
<div class="t" style="left:677.4px;top:473px;font-size:11px;color:#222;transform:scaleX(0.890);">45</div>
<div class="t" style="left:720.6px;top:473px;font-size:11px;color:#222;transform:scaleX(0.890);">50</div>
<div class="t" style="left:763.7px;top:473px;font-size:11px;color:#222;transform:scaleX(0.890);">55</div>
<div class="t" style="left:806.9px;top:473px;font-size:11px;color:#222;transform:scaleX(0.890);">60</div>
<div class="t" style="left:850.0px;top:473px;font-size:11px;color:#222;transform:scaleX(0.890);">65</div>
<div class="t" style="left:893.2px;top:473px;font-size:11px;color:#222;transform:scaleX(0.890);">70</div>
<div class="t" style="left:936.4px;top:473px;font-size:11px;color:#222;transform:scaleX(0.890);">75</div>
<div class="t" style="left:979.5px;top:473px;font-size:11px;color:#222;transform:scaleX(0.890);">80</div>
<div class="t" style="left:1022.7px;top:473px;font-size:11px;color:#222;transform:scaleX(0.890);">85</div>
<div class="t" style="left:1047.0px;top:473px;font-size:11px;color:#222;transform:scaleX(0.840);">[s]</div>
<div class="abs" style="left:570px;top:496.5px;width:44px;height:14.5px;background:linear-gradient(#fdfdfd,#ececec 50%,#e2e2e2 50%,#f4f4f4);border:1px solid #c0c0c0"></div>
<div class="abs" style="left:270.5px;top:496.5px;width:310.5px;height:14.5px;background:linear-gradient(#d6d6d6,#eeeeee 35%,#fafafa);border:1px solid #c6c6c6;border-radius:7px"></div>
<div class="abs" style="left:597.5px;top:497px;width:1px;height:13.5px;background:#c4c4c4"></div>
<svg class="abs" style="left:581px;top:497px" width="33" height="14"><path d="M5.5 7 L10.5 4 L10.5 10 Z" fill="#4a4a4a"/><path d="M27 7 L22 4 L22 10 Z" fill="#4a4a4a"/></svg>
<div class="abs" style="left:275.5px;top:498px;width:22.5px;height:12px;border:1px solid #8a8a8a;border-radius:6px;background:linear-gradient(#fff,#f0f0f0 50%,#e2e2e2 50%,#f4f4f4)"></div>
<div class="t" style="left:628.9px;top:489px;font-size:13px;color:#111;">All</div>
<div class="radio on" style="left:629.0px;top:505.0px"></div>
<div class="t" style="left:659.7px;top:489px;font-size:13px;color:#111;">50</div>
<div class="radio" style="left:660.0px;top:505.0px"></div>
<div class="t" style="left:690.7px;top:489px;font-size:13px;color:#111;">20</div>
<div class="radio" style="left:691.0px;top:505.0px"></div>
<div class="t" style="left:721.7px;top:489px;font-size:13px;color:#111;">10</div>
<div class="radio" style="left:722.0px;top:505.0px"></div>
<div class="t" style="left:756.4px;top:489px;font-size:13px;color:#111;">5</div>
<div class="radio" style="left:753.0px;top:505.0px"></div>
<div class="t" style="left:787.4px;top:489px;font-size:13px;color:#111;">2</div>
<div class="radio" style="left:784.0px;top:505.0px"></div>
<div class="t" style="left:817.9px;top:489px;font-size:13px;color:#111;">1</div>
<div class="radio" style="left:815.0px;top:505.0px"></div>
<div class="t" style="left:843.5px;top:489px;font-size:13px;color:#111;">0.5</div>
<div class="radio" style="left:846.0px;top:505.0px"></div>
<div class="t" style="left:874.7px;top:489px;font-size:13px;color:#111;">0.2</div>
<div class="radio" style="left:877.0px;top:505.0px"></div>
<div class="t" style="left:905.7px;top:489px;font-size:13px;color:#111;">0.1</div>
<div class="radio" style="left:908.0px;top:505.0px"></div>
<div class="t" style="left:934.9px;top:489px;font-size:13px;color:#111;transform:scaleX(0.914);">50m</div>
<div class="radio" style="left:940.0px;top:505.0px"></div>
<div class="t" style="left:967.8px;top:489px;font-size:13px;color:#111;transform:scaleX(0.924);">20m</div>
<div class="radio" style="left:973.0px;top:505.0px"></div>
<div class="t" style="left:1001.7px;top:489px;font-size:13px;color:#111;transform:scaleX(0.883);">10m</div>
<div class="radio" style="left:1006.0px;top:505.0px"></div>
<div class="t" style="left:1038.7px;top:498px;font-size:13px;color:#111;transform:scaleX(0.840);">[s]</div>
<div class="t" style="left:18.3px;top:534px;font-size:11px;color:#111;transform:scaleX(0.959);">Single Sample Per File Assign</div>
<div class="grp" style="left:8.0px;top:546.0px;width:226.0px;height:116.5px;"></div>
<div class="t" style="left:24.2px;top:566px;font-size:13px;color:#111;transform:scaleX(0.972);">Map root key</div>
<div class="t" style="left:24.2px;top:582px;font-size:13px;color:#111;transform:scaleX(0.960);">from file name</div>
<div class="radio on" style="left:24.7px;top:607.3px"></div>
<div class="t" style="left:43.7px;top:607px;font-size:13px;color:#111;transform:scaleX(0.918);">Name (i.e. C#4)</div>
<div class="radio" style="left:24.7px;top:633.0px"></div>
<div class="t" style="left:43.7px;top:633px;font-size:13px;color:#111;transform:scaleX(0.953);">Number (i.e. 39)</div>
<div class="btn " style="left:155.0px;top:628.4px;width:63.0px;"><span style="display:inline-block;transform:scaleX(0.961)">Assign</span></div>
<svg class="abs" style="left:58px;top:548px" width="72" height="112" viewBox="58 548 72 112"><path d="M61 572 a4 4 0 0 1 4 -4 h13 l2 -10 l3 -6 l2 5 l3 1 l2 4 l3 -2 l3 9 h24 a4 4 0 0 1 4 4 v55 a4 4 0 0 1 -4 4 h-55 a4 4 0 0 1 -4 -4 z" fill="#808080" fill-opacity="0.36"/><circle cx="83" cy="586" r="1.2" fill="#e6e6e6"/><circle cx="102" cy="584" r="1.2" fill="#e6e6e6"/><path d="M92 592 v11 h5" stroke="#e2e2e2" stroke-width="1.6" fill="none"/><path d="M80 612 q14 6 28 0" stroke="#d4d4d4" stroke-width="1.6" fill="none"/></svg>
<div class="t" style="left:62.0px;top:640px;font-size:17px;color:rgba(125,125,125,0.33);font-weight:bold;transform:scaleX(1.017);">kytary</div>
<div class="t" style="left:249.2px;top:534px;font-size:11px;color:#111;transform:scaleX(0.970);">Multi Sample Per File Assign</div>
<div class="grp" style="left:239.0px;top:546.0px;width:247.5px;height:116.5px;"></div>
<div class="t" style="left:255.3px;top:569px;font-size:13px;color:#111;transform:scaleX(0.933);">Start Key</div>
<div class="t" style="left:325.4px;top:569px;font-size:13px;color:#111;transform:scaleX(0.924);">Interval</div>
<div class="fld" style="left:255.3px;top:588.0px;width:41.7px;height:22.0px"><span style="display:inline-block;transform-origin:0 50%;transform:scaleX(0.864)">C3</span></div>
<div class="spin" style="left:299.3px;top:588.5px"></div>
<div class="fld" style="left:325.0px;top:588.0px;width:54.0px;height:22.0px"><span style="display:inline-block;transform-origin:0 50%;transform:scaleX(0.930)">1 semi</span></div>
<div class="spin" style="left:381.0px;top:588.5px"></div>
<div class="btn " style="left:406.8px;top:592.3px;width:63.2px;"><span style="display:inline-block;transform:scaleX(0.915)">Remap</span></div>
<div class="t" style="left:255.8px;top:629px;font-size:13px;color:#111;transform:scaleX(0.978);">Threshold</div>
<div class="fld" style="left:325.0px;top:624.0px;width:54.0px;height:21.5px"><span style="display:inline-block;transform-origin:0 50%;transform:scaleX(0.999)">-45 dB</span></div>
<div class="spin" style="left:381.0px;top:624.0px"></div>
<div class="btn def" style="left:406.8px;top:624.2px;width:63.2px;"><span style="display:inline-block;transform:scaleX(0.959)">Assign</span></div>
<div class="t" style="left:501.3px;top:534px;font-size:11px;color:#111;transform:scaleX(0.960);">Manual Sample Assign</div>
<div class="grp" style="left:490.5px;top:546.0px;width:263.5px;height:116.5px;"></div>
<div class="t" style="left:507.4px;top:575px;font-size:13px;color:#111;transform:scaleX(0.955);">Root Key</div>
<div class="t" style="left:577.6px;top:575px;font-size:13px;color:#111;transform:scaleX(0.920);">Range Begin</div>
<div class="t" style="left:660.8px;top:575px;font-size:13px;color:#111;transform:scaleX(0.928);">Range End</div>
<div class="fld" style="left:507.4px;top:594.0px;width:41.6px;height:22.0px"><span style="display:inline-block;transform-origin:0 50%;transform:scaleX(0.864)">C3</span></div>
<div class="spin" style="left:551.3px;top:594.3px"></div>
<div class="fld dis" style="left:577.0px;top:594.0px;width:49.6px;height:22.0px">n/a</div>
<div class="spin dis" style="left:627.6px;top:594.3px"></div>
<div class="fld dis" style="left:660.8px;top:594.0px;width:48.7px;height:22.0px">n/a</div>
<div class="spin dis" style="left:710.5px;top:594.3px"></div>
<div class="chk" style="left:509.3px;top:631.0px"><svg width="18" height="18" viewBox="0 0 18 18" style="position:absolute;left:-1px;top:-5px;overflow:visible"><path d="M3.2 9.8 L6.3 14.2 L12.6 2.2" fill="none" stroke="#111" stroke-width="2.1" stroke-linecap="round" stroke-linejoin="round"/></svg></div>
<div class="t" style="left:527.6px;top:632px;font-size:13px;color:#111;transform:scaleX(0.917);">Enabled</div>
<div class="btn " style="left:587.0px;top:628.4px;width:77.7px;"><span style="display:inline-block;transform:scaleX(0.946)">Deassign</span></div>
<div class="btn dis" style="left:675.3px;top:628.4px;width:62.3px;"><span style="display:inline-block;transform:scaleX(0.959)">Assign</span></div>
<div class="btn " style="left:759.0px;top:634.3px;width:98.0px;"><span style="display:inline-block;transform:scaleX(0.968)">Deassign All</span></div>
<div class="abs" style="left:990.5px;top:569.3px;width:4px;height:89px;border-radius:2px;background:linear-gradient(90deg,#7e7e7e,#b4b4b4);box-shadow:1px 0 0 rgba(255,255,255,.5)"></div>
<div class="abs knob" style="left:984.8px;top:639.8px"></div>
<div class="radio" style="left:1008.6px;top:571.1px"></div>
<div class="t" style="left:1027.4px;top:572px;font-size:13px;color:#111;">All</div>
<div class="radio on" style="left:1008.6px;top:593.0px"></div>
<div class="t" style="left:1027.4px;top:594px;font-size:13px;color:#111;">1</div>
<div class="radio" style="left:1008.6px;top:610.0px"></div>
<div class="t" style="left:1027.4px;top:611px;font-size:13px;color:#111;">0.5</div>
<div class="radio" style="left:1008.6px;top:627.2px"></div>
<div class="t" style="left:1027.4px;top:628px;font-size:13px;color:#111;">0.1</div>
<div class="radio" style="left:1008.6px;top:644.3px"></div>
<div class="t" style="left:1027.4px;top:645px;font-size:13px;color:#111;">0.01</div>
<div class="btn dis" style="left:5.0px;top:677.3px;width:62.0px;"><span style="display:inline-block;transform:scaleX(0.942)">Cancel</span></div>
<div class="abs" style="left:73px;top:680px;width:198.5px;height:10px;background:linear-gradient(#3b76c8 0%,#5a9ce0 10%,#9cc4ec 26%,#6aaae8 40%,#4a98e6 55%,#68b4f4 75%,#86ccff 92%,#7ab8e8 100%);box-shadow:0 1px 0 rgba(0,0,0,.18)"></div>
<div class="t" style="left:282.5px;top:681px;font-size:13px;color:#111;transform:scaleX(0.972);">Assign completed successfully.</div>
<div class="t" style="left:844.4px;top:680.7px;font-size:13px;letter-spacing:-0.2px">Connected: <span style="letter-spacing:2.5px">----</span></div>
<svg class="abs" style="left:1050px;top:686px" width="14" height="14"><path d="M13 2 L2 13 M13 6 L6 13 M13 10 L10 13" stroke="#8a8a8a" stroke-width="1"/></svg>
</body></html>
